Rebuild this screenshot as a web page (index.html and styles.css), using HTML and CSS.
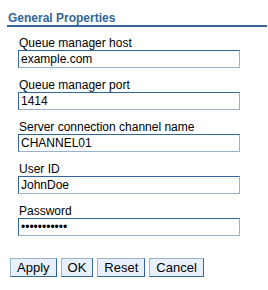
FILE: index.html
```html
<!DOCTYPE html>
<html lang="en">
<head>
    <meta charset="UTF-8">
    <link rel="stylesheet" href="styles.css">
</head>
<body>
    <div class="panel">
        <h2 class="panel-title">General Properties</h2>
        <div class="fields">
            <div class="field">
                <label>Queue manager host</label>
                <input type="text" value="example.com">
            </div>
            <div class="field">
                <label>Queue manager port</label>
                <input type="text" value="1414">
            </div>
            <div class="field">
                <label>Server connection channel name</label>
                <input type="text" value="CHANNEL01">
            </div>
            <div class="field">
                <label>User ID</label>
                <input type="text" value="JohnDoe">
            </div>
            <div class="field">
                <label>Password</label>
                <input type="password" value="secretpass1">
            </div>
        </div>
        <div class="actions">
            <button>Apply</button>
            <button>OK</button>
            <button>Reset</button>
            <button>Cancel</button>
        </div>
    </div>
</body>
</html>
```

FILE: styles.css
```css
:root {
    --title: #336699;
    --border-dark: #336699;
    --border-light: #99b3cc;
    --btn-bg: #e8f0fc;
    --text: #000000;
}

* {
    margin: 0;
    padding: 0;
    box-sizing: border-box;
    font-family: 'Liberation Sans', Arial, sans-serif;
}

body {
    background: #ffffff;
    color: var(--text);
    font-size: 12px;
}

.panel {
    padding: 11px 1px 0 7px;
}

.panel-title {
    font-size: 12px;
    font-weight: bold;
    color: var(--title);
    padding: 0 0 0 1px;
    border-bottom: 2px solid var(--title);
    line-height: 14px;
}

.fields {
    padding: 9px 0 0 11px;
    display: flex;
    flex-direction: column;
    gap: 10px;
}

.field {
    display: flex;
    flex-direction: column;
}

.field label {
    line-height: 14px;
    padding-left: 1px;
}

.field input {
    width: 222px;
    height: 18px;
    font-size: 12px;
    padding: 0 2px;
    border: 1px solid;
    border-color: var(--border-dark) var(--border-light) var(--border-light) var(--border-dark);
    background: #ffffff;
    color: var(--text);
    outline: none;
}

.actions {
    display: flex;
    gap: 4px;
    padding: 22px 0 0 3px;
}

.actions button {
    font-size: 13px;
    height: 19px;
    padding: 0 6px;
    background: var(--btn-bg);
    border: 1px solid;
    border-color: var(--border-light) var(--border-dark) var(--border-dark) var(--border-light);
    color: var(--text);
}
```
